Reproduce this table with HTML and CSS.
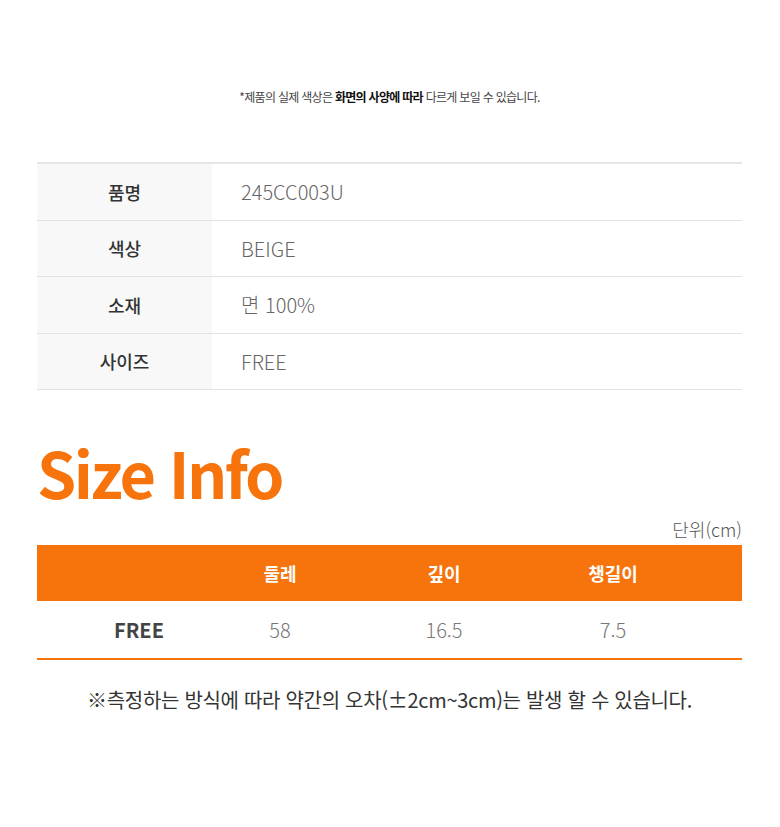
FILE: index.html
```html
<!DOCTYPE html>
<html lang="ko">
<head>
    <meta charset="UTF-8">
    <title>상품 정보</title>
    <link rel="stylesheet" href="styles.css">
</head>
<body>
    <div class="wrap">
        <p class="notice">*제품의 실제 색상은 <b>화면의 사양에 따라</b> 다르게 보일 수 있습니다.</p>

        <div class="info">
            <div class="info-row">
                <div class="info-th">품명</div>
                <div class="info-td">245CC003U</div>
            </div>
            <div class="info-row">
                <div class="info-th">색상</div>
                <div class="info-td">BEIGE</div>
            </div>
            <div class="info-row">
                <div class="info-th">소재</div>
                <div class="info-td">면 100%</div>
            </div>
            <div class="info-row">
                <div class="info-th">사이즈</div>
                <div class="info-td">FREE</div>
            </div>
        </div>

        <h2 class="size-title">Size Info</h2>
        <p class="unit">단위(cm)</p>

        <div class="size">
            <div class="size-row size-head">
                <span></span>
                <span>둘레</span>
                <span>깊이</span>
                <span>챙길이</span>
                <span></span>
            </div>
            <div class="size-row size-body">
                <span class="size-name">FREE</span>
                <span>58</span>
                <span>16.5</span>
                <span>7.5</span>
                <span></span>
            </div>
        </div>

        <p class="caution">※측정하는 방식에 따라 약간의 오차(±2cm~3cm)는 발생 할 수 있습니다.</p>
    </div>
</body>
</html>
```

FILE: styles.css
```css
*{
    padding: 0;
    margin: 0;
    box-sizing: border-box;
}

body{
    font-family: "Noto Sans CJK KR", "Noto Sans", sans-serif;
    background: #fff;
    color: #333;
}

.wrap{
    width: 705px;
    margin-left: 37px;
    padding-top: 87px;
}

.notice{
    font-size: 12px;
    line-height: 20px;
    text-align: center;
    color: #444;
    letter-spacing: -0.7px;
}

.notice b{
    color: #111;
}

/* 상품 정보 */
.info{
    margin-top: 55px;
    border-top: 2px solid #e6e6e6;
}

.info-row{
    display: flex;
    height: 56.5px;
    border-bottom: 1px solid #e2e2e2;
}

.info-th{
    width: 175px;
    background: #f8f8f8;
    display: flex;
    align-items: center;
    justify-content: center;
    font-size: 18px;
    font-weight: 500;
    color: #333;
}

.info-td{
    flex: 1;
    display: flex;
    align-items: center;
    padding-left: 29px;
    font-size: 20px;
    color: #666;
    font-weight: 300;
}

/* 사이즈 */
.size-title{
    margin-top: 37px;
    font-size: 63px;
    line-height: 90px;
    font-weight: 700;
    color: #f7730c;
    letter-spacing: -2.5px;
}

.unit{
    text-align: right;
    font-size: 18px;
    line-height: 24px;
    color: #555;
    font-weight: 300;
    margin-top: 0;
}

.size{
    margin-top: 4px;
    border-bottom: 2px solid #f7730c;
}

.size-row{
    display: grid;
    grid-template-columns: 204px 78px 250px 88px 1fr;
    align-items: center;
    text-align: center;
}

.size-head{
    height: 56px;
    background: #f7730c;
    color: #fff;
    font-size: 18px;
    font-weight: 700;
}

.size-body{
    height: 57px;
    font-size: 20px;
    font-weight: 300;
    color: #777;
}

.size-body .size-name{
    font-weight: 700;
    color: #444;
}

.caution{
    margin-top: 26px;
    text-align: center;
    font-size: 20px;
    line-height: 28px;
    color: #333;
    letter-spacing: -0.3px;
}
```
